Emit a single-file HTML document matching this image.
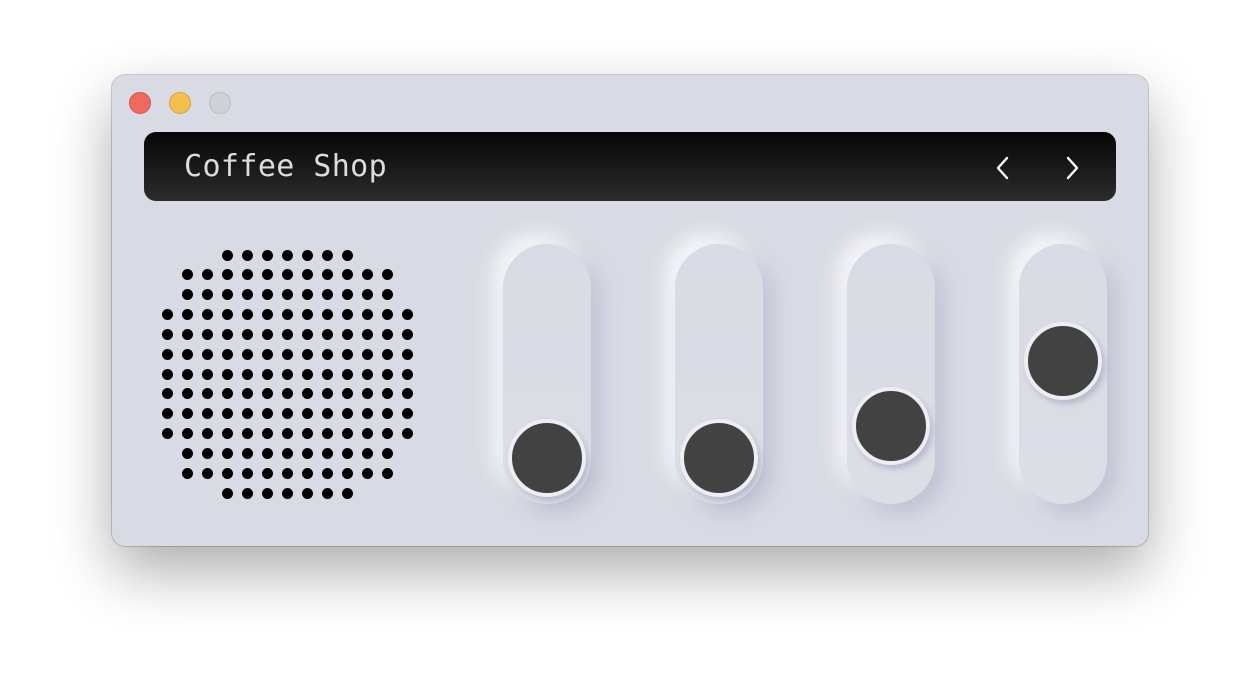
<!DOCTYPE html>
<html><head><style>
html,body{margin:0;padding:0;background:#fff;width:1260px;height:694px;overflow:hidden}
.win{position:absolute;left:112px;top:75px;width:1036px;height:471px;border-radius:13px;background:#d9dbe4;box-shadow:0 25px 60px rgba(0,0,0,.33),0 0 0 1px rgba(0,0,0,.18);}
.tl{position:absolute;top:17px;width:22px;height:22px;border-radius:50%;box-sizing:border-box}
.bar{position:absolute;left:32px;top:57px;width:972px;height:69px;border-radius:12px;background:linear-gradient(#060606,#2c2c2c)}
.bar span{position:absolute;left:40px;top:17px;font:30px "DejaVu Sans Mono","Liberation Mono",monospace;color:#dcdcdc;letter-spacing:0.4px}
.track{position:absolute;top:169px;width:88px;height:260px;border-radius:44px;background:linear-gradient(#d9dbe4,#dcdee6);box-shadow:10px 10px 20px rgba(160,165,190,.45),-10px -10px 20px rgba(255,255,255,.8)}
.knob{position:absolute;left:5px;width:70px;height:70px;border-radius:50%;background:#424242;border:4px solid #eceef3;box-shadow:3px 4px 6px rgba(140,145,170,.45)}
.dot{position:absolute;width:11px;height:11px;border-radius:50%;background:#000}
</style></head><body>
<div class="win">
<div class="tl" style="left:17px;background:#ee6a5f;border:1px solid #d55247"></div>
<div class="tl" style="left:57px;background:#f5bf4f;border:1px solid #d9a23a"></div>
<div class="tl" style="left:97px;background:#d0d1d6;border:1px solid #b9bac0"></div>
<div class="bar"><span>Coffee Shop</span>
<svg style="position:absolute;left:850px;top:23px" width="110" height="26"><path d="M13 3 L4 13 L13 23" fill="none" stroke="#fff" stroke-width="2.4" stroke-linecap="round" stroke-linejoin="round"/><path d="M74 3 L83 13 L74 23" fill="none" stroke="#fff" stroke-width="2.4" stroke-linecap="round" stroke-linejoin="round"/></svg>
</div>
<div id="dots"></div>
<div class="track" style="left:391px"><div class="knob" style="top:175px"></div></div>
<div class="track" style="left:563px"><div class="knob" style="top:175px"></div></div>
<div class="track" style="left:735px"><div class="knob" style="top:143px"></div></div>
<div class="track" style="left:907px"><div class="knob" style="top:78px"></div></div>
</div>
<script>
var w=[7,11,11,13,13,13,13,13,13,13,11,11,7],h='';
for(var r=0;r<13;r++){var n=w[r],s=(13-n)/2;for(var c=0;c<n;c++){var x=167+(s+c)*20-112-5.5,y=255+r*19.85-75-5.5;h+='<div class="dot" style="left:'+x+'px;top:'+y+'px"></div>';}}
document.getElementById('dots').innerHTML=h;
</script>
</body></html>
